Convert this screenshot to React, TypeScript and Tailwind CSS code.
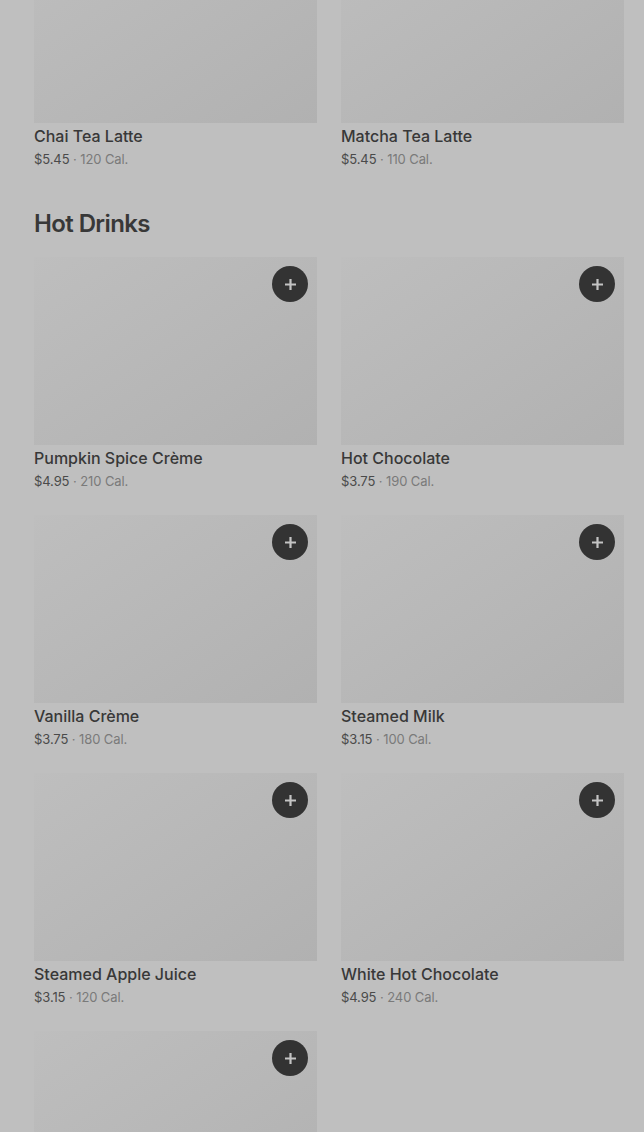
const topItems = [
  { name: "Chai Tea Latte", price: "$5.45", cal: "120 Cal." },
  { name: "Matcha Tea Latte", price: "$5.45", cal: "110 Cal." },
];

const hotDrinks = [
  { name: "Pumpkin Spice Crème", price: "$4.95", cal: "210 Cal." },
  { name: "Hot Chocolate", price: "$3.75", cal: "190 Cal." },
  { name: "Vanilla Crème", price: "$3.75", cal: "180 Cal." },
  { name: "Steamed Milk", price: "$3.15", cal: "100 Cal." },
  { name: "Steamed Apple Juice", price: "$3.15", cal: "120 Cal." },
  { name: "White Hot Chocolate", price: "$4.95", cal: "240 Cal." },
  { name: "Caramel Apple Spice", price: "$4.95", cal: "330 Cal." },
];

type Item = { name: string; price: string; cal: string };

function MenuCard({ item, addButton }: { item: Item; addButton: boolean }) {
  return (
    <div className="flex flex-col">
      <div className="relative h-[188px] bg-gradient-to-br from-[#bebebe] to-[#b1b1b1]">
        {addButton && (
          <button className="absolute top-[9px] right-[9px] flex h-9 w-9 items-center justify-center rounded-full bg-[#333333]">
            <svg width="13" height="13" viewBox="0 0 13 13">
              <path d="M6.5 1v11M1 6.5h11" stroke="#c4c4c4" strokeWidth="2.2" />
            </svg>
          </button>
        )}
      </div>
      <div className="mt-[1px] text-[16px] leading-6 font-medium text-[#383838]">{item.name}</div>
      <div className="mt-[1px] text-[13px] leading-5 tracking-[-0.1px] text-[#4a4a4a]">
        {item.price} <span className="text-[#7a7a7a]">·</span>{" "}
        <span className="text-[#7a7a7a]">{item.cal}</span>
      </div>
    </div>
  );
}

export default function App() {
  return (
    <div className="h-[1132px] overflow-hidden bg-[#bfbfbf] pl-[34px] pr-[20px] font-['Inter','Liberation_Sans',sans-serif]">
      <div className="-mt-[65px] grid grid-cols-2 gap-x-6">
        {topItems.map((item) => (
          <MenuCard key={item.name} item={item} addButton={false} />
        ))}
      </div>
      <h2 className="mt-[39px] mb-[17px] text-[24px] leading-8 font-semibold tracking-[-0.6px] text-[#383838]">
        Hot Drinks
      </h2>
      <div className="grid grid-cols-2 gap-x-6 gap-y-6">
        {hotDrinks.map((item) => (
          <MenuCard key={item.name} item={item} addButton />
        ))}
      </div>
    </div>
  );
}
